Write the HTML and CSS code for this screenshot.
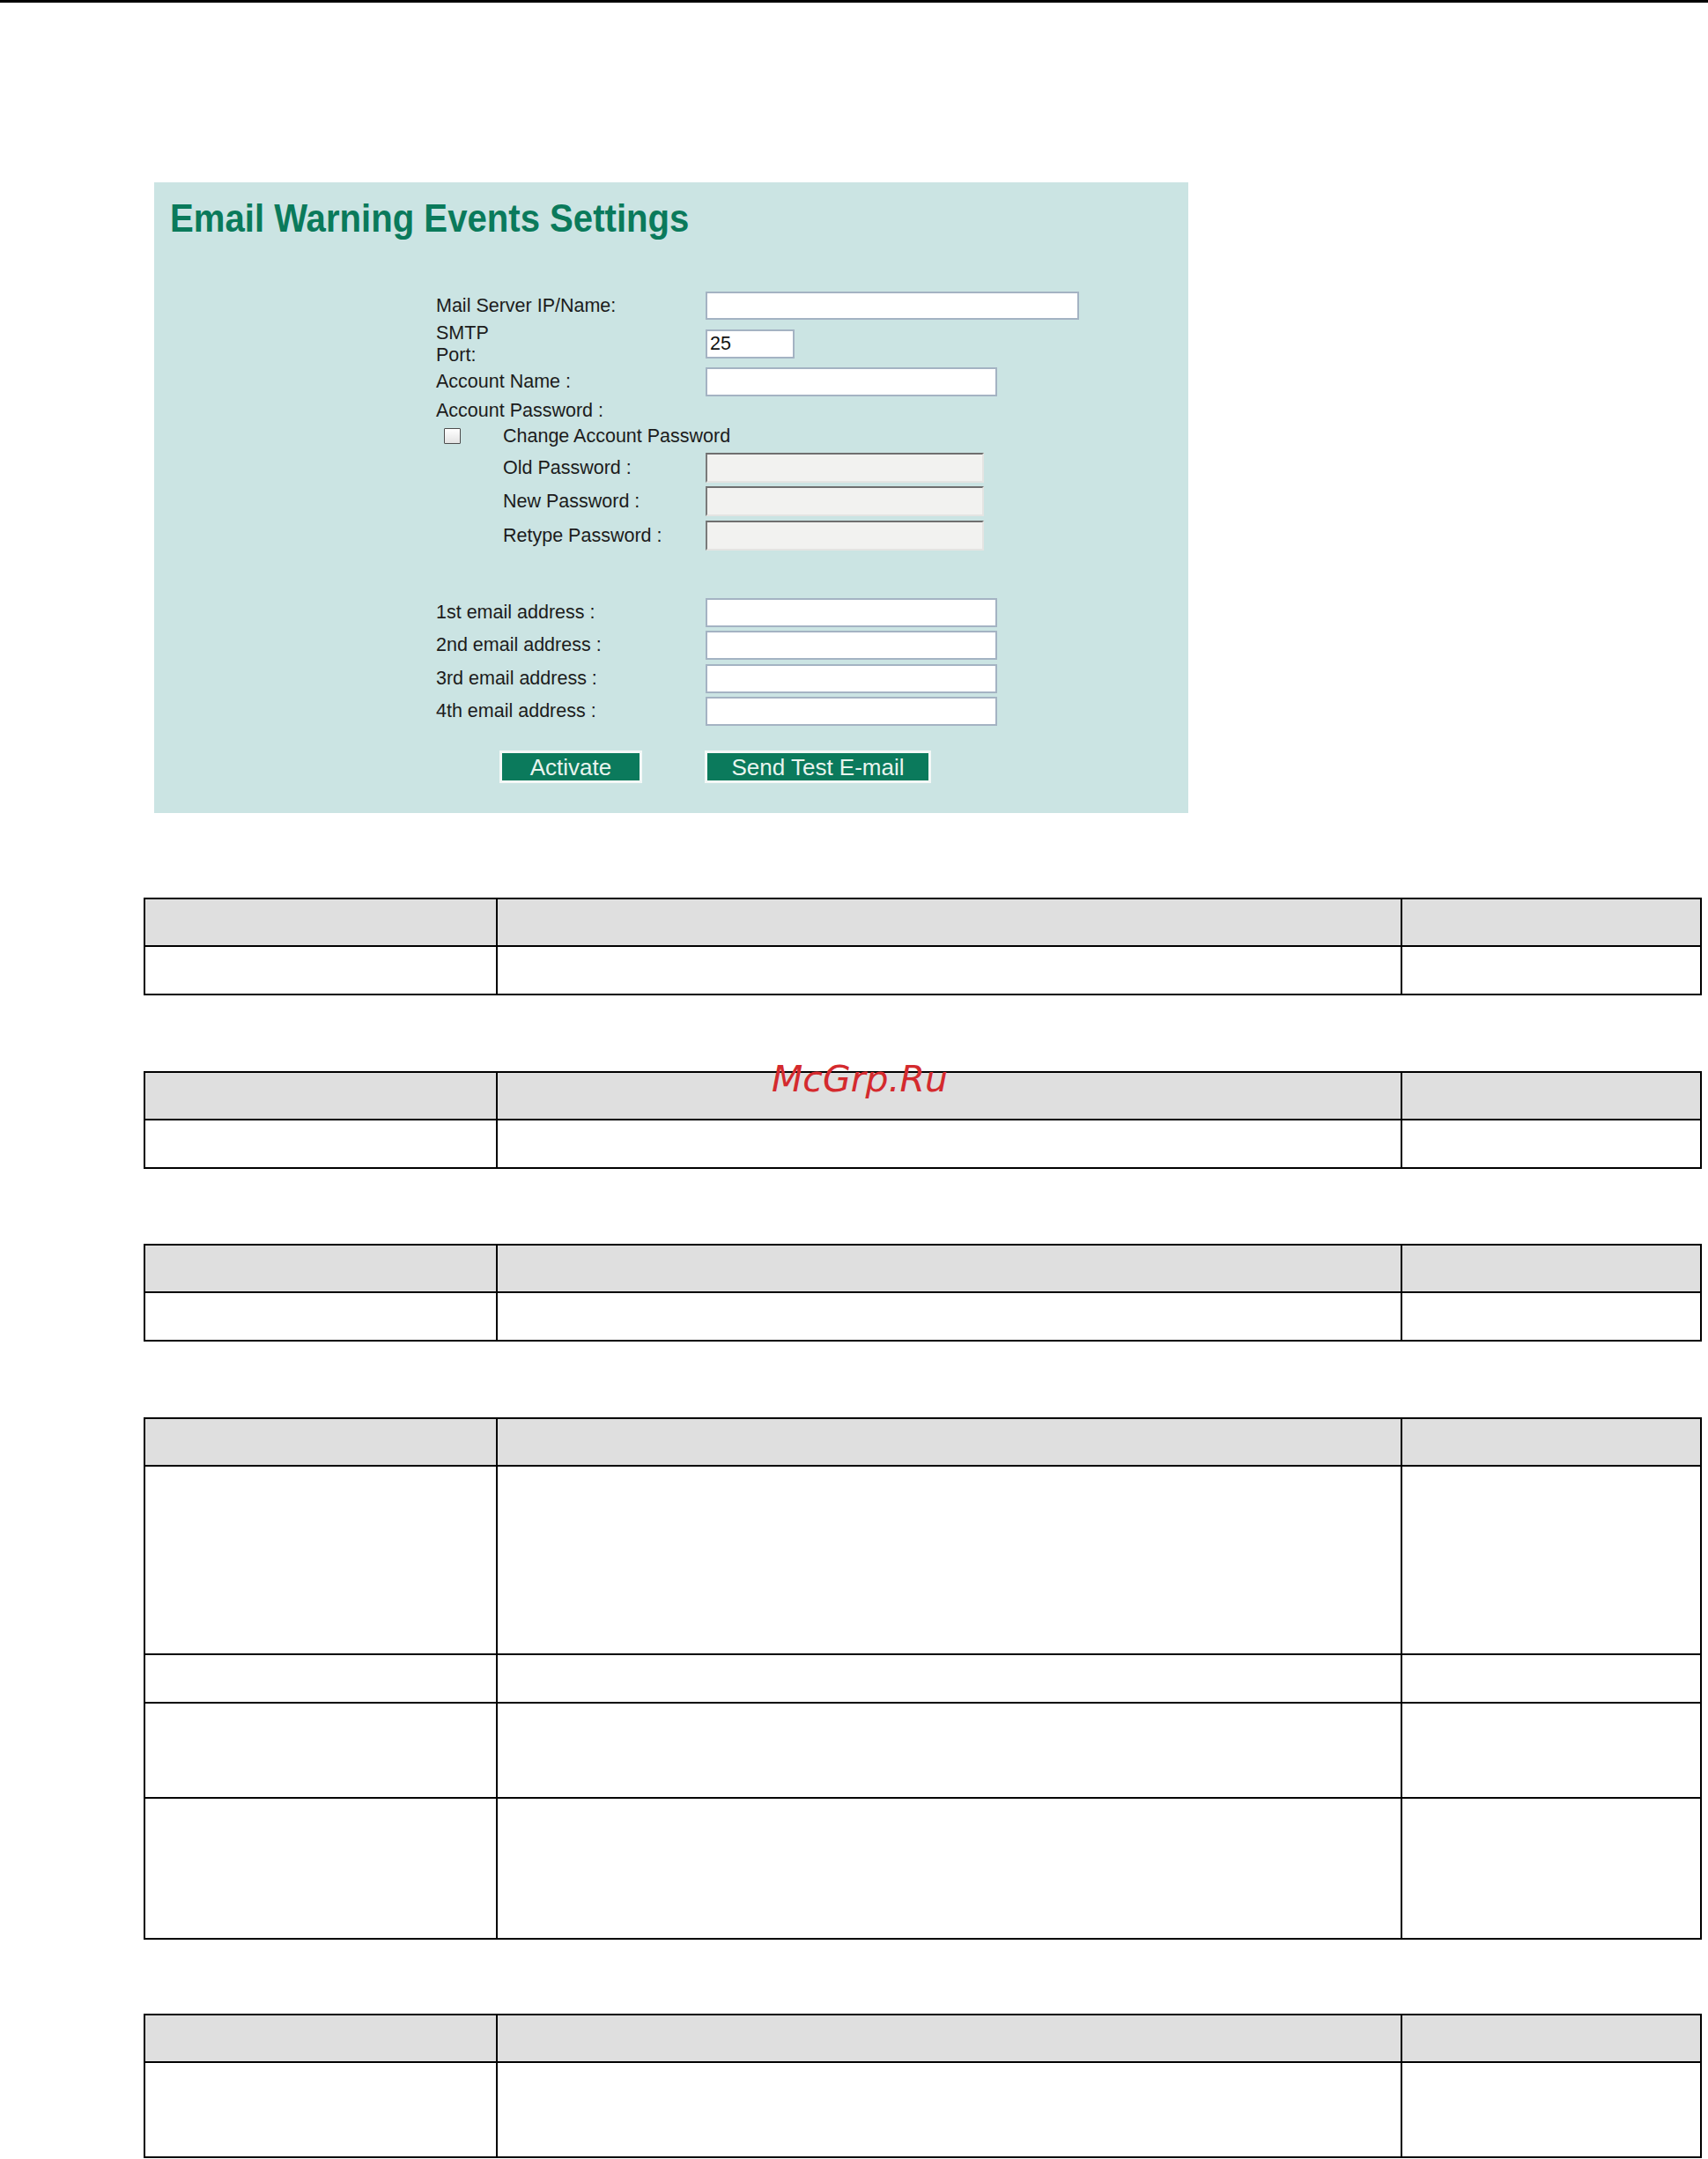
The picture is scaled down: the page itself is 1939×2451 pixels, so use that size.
FILE: index.html
```html
<!DOCTYPE html>
<html>
<head>
<meta charset="utf-8">
<title>Email Warning Events Settings</title>
<link rel="stylesheet" href="styles.css">
</head>
<body>
<div class="topline"></div>

<div class="panel">
  <h1 class="title">Email Warning Events Settings</h1>
  <div class="form">
    <div class="row r1">
      <div class="lbl">Mail Server IP/Name:</div>
      <input class="field w-mail" type="text">
    </div>
    <div class="row r2">
      <div class="lbl">SMTP<br>Port:</div>
      <input class="field w-port" type="text" value="25">
    </div>
    <div class="row r3">
      <div class="lbl">Account Name :</div>
      <input class="field w-mid" type="text">
    </div>
    <div class="row r4">
      <div class="lbl">Account Password :</div>
    </div>
    <div class="row r5">
      <input class="check" type="checkbox">
      <div class="lbl-free">Change Account Password</div>
    </div>
    <div class="row r6">
      <div class="lbl ind">Old Password :</div>
      <input class="field w-pw" type="password" disabled>
    </div>
    <div class="row r7">
      <div class="lbl ind">New Password :</div>
      <input class="field w-pw" type="password" disabled>
    </div>
    <div class="row r8">
      <div class="lbl ind">Retype Password :</div>
      <input class="field w-pw" type="password" disabled>
    </div>
    <div class="row r9">
      <div class="lbl">1st email address :</div>
      <input class="field w-mid" type="text">
    </div>
    <div class="row r10">
      <div class="lbl">2nd email address :</div>
      <input class="field w-mid" type="text">
    </div>
    <div class="row r11">
      <div class="lbl">3rd email address :</div>
      <input class="field w-mid" type="text">
    </div>
    <div class="row r12">
      <div class="lbl">4th email address :</div>
      <input class="field w-mid" type="text">
    </div>
    <div class="btns">
      <button class="btn b-act" type="button">Activate</button>
      <button class="btn b-send" type="button">Send Test E-mail</button>
    </div>
  </div>
</div>

<table class="tbl t1">
  <colgroup><col class="c1"><col class="c2"><col class="c3"></colgroup>
  <tr class="hd"><th></th><th></th><th></th></tr>
  <tr class="h55"><td></td><td></td><td></td></tr>
</table>

<table class="tbl t2">
  <colgroup><col class="c1"><col class="c2"><col class="c3"></colgroup>
  <tr class="hd"><th></th><th></th><th></th></tr>
  <tr class="h55"><td></td><td></td><td></td></tr>
</table>

<table class="tbl t3">
  <colgroup><col class="c1"><col class="c2"><col class="c3"></colgroup>
  <tr class="hd"><th></th><th></th><th></th></tr>
  <tr class="h55"><td></td><td></td><td></td></tr>
</table>

<table class="tbl t4">
  <colgroup><col class="c1"><col class="c2"><col class="c3"></colgroup>
  <tr class="hd"><th></th><th></th><th></th></tr>
  <tr class="h214"><td></td><td></td><td></td></tr>
  <tr class="h55"><td></td><td></td><td></td></tr>
  <tr class="h108"><td></td><td></td><td></td></tr>
  <tr class="h160"><td></td><td></td><td></td></tr>
</table>

<table class="tbl t5">
  <colgroup><col class="c1"><col class="c2"><col class="c3"></colgroup>
  <tr class="hd"><th></th><th></th><th></th></tr>
  <tr class="h108"><td></td><td></td><td></td></tr>
</table>

<div class="watermark">McGrp.Ru</div>
</body>
</html>
```

FILE: styles.css
```css
html, body {
  margin: 0;
  padding: 0;
  background: #ffffff;
}

body {
  position: relative;
  font-family: "Liberation Sans", Arial, sans-serif;
  color: #1c1c1c;
}

.topline {
  height: 3px;
  background: #000000;
}

.panel {
  margin: 204px 0 0 175px;
  width: 1174px;
  height: 716px;
  background: #cbe4e3;
  overflow: hidden;
}

.title {
  margin: 19px 0 0 18px;
  font-family: "Liberation Sans", Arial, sans-serif;
  font-weight: bold;
  font-size: 44px;
  line-height: 44px;
  color: #0a7a5b;
  transform: scaleX(0.912);
  transform-origin: left center;
  white-space: nowrap;
}

.form {
  margin: 61px 0 0 320px;
}

.row {
  display: flex;
  align-items: center;
  height: 33px;
}

.r1 { height: 32px; }
.r2 { margin-top: 11px; }
.r3 { margin-top: 10px; }
.r4 { margin-top: 4px; height: 24px; }
.r5 { margin-top: 5px; height: 24px; }
.r6 { margin-top: 7px; height: 34px; }
.r7 { margin-top: 4px; height: 34px; }
.r8 { margin-top: 5px; height: 34px; }
.r9 { margin-top: 54px; }
.r10 { margin-top: 4px; }
.r11 { margin-top: 5px; }
.r12 { margin-top: 4px; }

.lbl, .lbl-free {
  flex: none;
  font-size: 21.5px;
  line-height: 25px;
  color: #1c1c1c;
  white-space: nowrap;
}

.lbl {
  width: 306px;
  box-sizing: border-box;
}

.lbl.ind {
  padding-left: 76px;
}

.field {
  flex: none;
  box-sizing: border-box;
  height: 100%;
  margin: 0;
  padding: 0 3px;
  border: 2px solid #a4b3c3;
  border-radius: 0;
  background: #ffffff;
  font-family: "Liberation Sans", Arial, sans-serif;
  font-size: 21.5px;
  color: #111111;
  outline: none;
}

.field:disabled {
  background: #f2f2f0;
  border-top-color: #6f6f6f;
  border-left-color: #7a7a7a;
  border-right-color: #e4e4e2;
  border-bottom-color: #e4e4e2;
}

.w-mail { width: 424px; }
.w-port { width: 101px; }
.w-mid { width: 331px; }
.w-pw { width: 316px; }

.check {
  -webkit-appearance: none;
  appearance: none;
  flex: none;
  box-sizing: border-box;
  width: 19px;
  height: 18px;
  margin: 0 48px 0 9px;
  border: 1.5px solid #4d4d4d;
  border-radius: 1px;
  background: linear-gradient(#ffffff, #e3e3e3);
}

.btns {
  display: flex;
  gap: 71px;
  margin-top: 28px;
  padding-left: 72px;
}

.btn {
  box-sizing: border-box;
  height: 37px;
  margin: 0;
  padding: 0;
  border: 3px solid #f4f8f7;
  background: #0b7a5c;
  color: #e8f4ee;
  font-family: "Liberation Sans", Arial, sans-serif;
  font-size: 26px;
  line-height: 30px;
  text-align: center;
}

.b-act { width: 162px; }
.b-send { width: 257px; }

.tbl {
  border-collapse: collapse;
  table-layout: fixed;
  width: 1769px;
  margin: 85px 0 0 163px;
}

.t1 { margin-top: 96px; }
.t2 { margin-top: 86px; }
.t3 { margin-top: 85px; }
.t4 { margin-top: 86px; }
.t5 { margin-top: 84px; }

.tbl th,
.tbl td {
  border: 2px solid #000000;
  padding: 0;
}

.tbl th {
  background: #dfdfdf;
}

.c1 { width: 400px; }
.c2 { width: 1027px; }
.c3 { width: 340px; }

.hd { height: 54px; }
.h55 { height: 55px; }
.h108 { height: 108px; }
.h160 { height: 160px; }
.h214 { height: 214px; }

.watermark {
  position: absolute;
  left: 876px;
  top: 1205px;
  font-family: "DejaVu Sans", sans-serif;
  font-style: oblique;
  font-size: 41px;
  line-height: 40px;
  color: #d42a2e;
  white-space: nowrap;
}
```
